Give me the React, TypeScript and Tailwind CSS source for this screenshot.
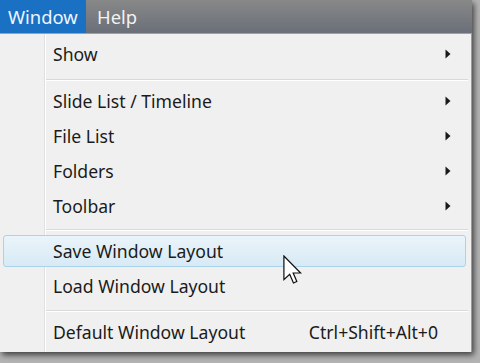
import React from "react";

const Arrow = () => (
  <svg width="6" height="10" viewBox="0 0 6 10" className="block">
    <polygon points="0.5,0.5 5.5,5 0.5,9.5" fill="#1a1a1a" />
  </svg>
);

type ItemProps = { label: string; sub?: boolean; shortcut?: string; hot?: boolean };

const Item = ({ label, sub, shortcut, hot }: ItemProps) => (
  <div className="relative h-[35px] flex items-center">
    {hot && (
      <div className="absolute left-[3px] right-[5px] top-[1px] bottom-[2px] rounded-[3px] border border-[#a9d3ea] bg-gradient-to-b from-[#eaf4fa] to-[#d8eaf5]" />
    )}
    <div className="relative flex-1 flex items-center pl-[53px] pr-[20px]">
      <span className="flex-1">{label}</span>
      {shortcut && <span className="mr-[13px]">{shortcut}</span>}
      {sub && <Arrow />}
    </div>
  </div>
);

const Sep = ({ h, top }: { h: number; top: number }) => (
  <div className="relative" style={{ height: h }}>
    <div className="absolute left-[46px] right-[3px]" style={{ top }}>
      <div className="h-px bg-[#d9d9d9]" />
      <div className="h-px bg-white" />
    </div>
  </div>
);

export default function App() {
  return (
    <div
      className="w-[480px] h-[363px] overflow-hidden bg-[#b4b4b4] text-[#1b1b1b] text-[17.6px]"
      style={{ fontFamily: '"Noto Sans", "Open Sans", sans-serif' }}
    >
      <div className="relative w-[472px] h-[352px] shadow-[2px_3px_6px_rgba(0,0,0,0.65)] flex flex-col">
        <div className="h-[34px] flex items-stretch bg-gradient-to-b from-[#888888] to-[#6a6f78] border-b border-[#a0a0a0] text-[18.4px]">
          <div className="w-[86px] bg-[#1a70c2] text-[#eef6ff] flex items-center pl-[8px]">Window</div>
          <div className="text-[#f2f2f2] flex items-center pl-[11px]">Help</div>
        </div>
        <div className="relative flex-1 bg-[#f0f0f0] border-r border-[#9a9a9a] pt-[3px]">
          <div className="absolute left-[44px] top-0 bottom-0 w-px bg-[#e0e0e0]" />
          <div className="absolute left-[45px] top-0 bottom-0 w-px bg-white" />
          <Item label="Show" sub />
          <Sep h={12} top={7} />
          <Item label="Slide List / Timeline" sub />
          <Item label="File List" sub />
          <Item label="Folders" sub />
          <Item label="Toolbar" sub />
          <Sep h={10} top={5} />
          <Item label="Save Window Layout" hot />
          <Item label="Load Window Layout" />
          <Sep h={11} top={6} />
          <Item label="Default Window Layout" shortcut="Ctrl+Shift+Alt+0" />
          <svg
            className="absolute left-[283px] top-[221px]"
            width="19"
            height="29"
            viewBox="0 0 12.5 19"
          >
            <path
              d="M0.6,0.6 L0.6,16.2 L4.4,12.6 L6.9,18.4 L9.1,17.4 L6.7,11.8 L11.6,11.8 Z"
              fill="white"
              stroke="#111"
              strokeWidth="0.8"
              strokeLinejoin="miter"
            />
          </svg>
        </div>
      </div>
    </div>
  );
}
